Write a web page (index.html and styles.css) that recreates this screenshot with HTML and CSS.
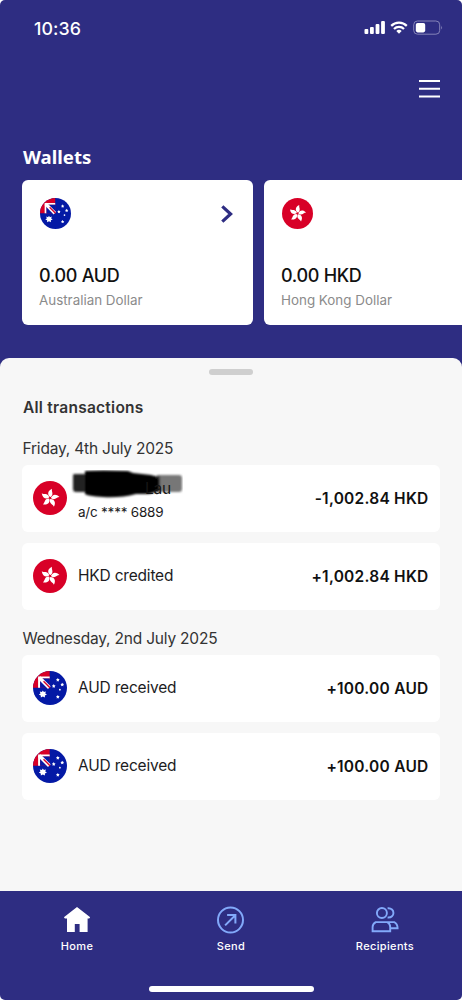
FILE: index.html
```html
<!DOCTYPE html>
<html lang="en">
<head>
<meta charset="utf-8">
<title>Wallets</title>
<link rel="stylesheet" href="styles.css">
</head>
<body>
<svg class="defs" aria-hidden="true">
  <defs>
    <clipPath id="round"><circle cx="50" cy="50" r="50"/></clipPath>
    <path id="petal" d="M50 47C41 43 38 31 51 22C50 30 60 36 52 46Z"/>
    <path id="star" d="M0-5.5L1.8-2.2L5.3-1.4L2.9 1.4L3.3 5L0 3.5L-3.3 5L-2.9 1.4L-5.3-1.4L-1.8-2.2Z"/>
    <symbol id="flag-au" viewBox="0 0 100 100">
      <g clip-path="url(#round)">
        <path fill="#0419a5" d="M0 0H100V100H0Z"/>
        <path fill="#d80027" d="M0 0H49V49H0Z"/>
        <path fill="#fff" d="M15 16H49V22H21V49H15Z"/>
        <path fill="#0419a5" d="M21 22H49V49H21Z"/>
        <path stroke="#fff" stroke-width="11" d="M18 19L48 49"/>
        <path stroke="#d80027" stroke-width="4" d="M31 30L50 49"/>
        <path fill="#fff" d="M29 57L32 62L38 60L36 66L41 69L35 72L35 78L29 75L23 78L23 72L17 69L22 66L20 60L26 62Z"/>
        <g fill="#fff">
          <use href="#star" x="73" y="26"/><use href="#star" x="61" y="44"/>
          <use href="#star" x="86" y="40"/><use href="#star" x="73" y="76"/>
          <circle cx="79" cy="55" r="2.7"/>
        </g>
      </g>
    </symbol>
    <symbol id="flag-hk" viewBox="0 0 100 100">
      <circle cx="50" cy="50" r="50" fill="#d80027"/>
      <g fill="#fff" transform="rotate(10 50 50)">
        <use href="#petal"/>
        <use href="#petal" transform="rotate(72 50 50)"/>
        <use href="#petal" transform="rotate(144 50 50)"/>
        <use href="#petal" transform="rotate(216 50 50)"/>
        <use href="#petal" transform="rotate(288 50 50)"/>
      </g>
    </symbol>
  </defs>
</svg>
<div class="phone">
  <header class="status">
    <span class="clock">10:36</span>
    <svg class="status-icons" width="80" height="16" viewBox="0 0 80 16">
      <g fill="#fff">
        <rect x="0.5" y="9" width="3.8" height="5" rx="1"/>
        <rect x="6" y="7" width="3.8" height="7" rx="1"/>
        <rect x="11.6" y="4" width="3.8" height="10" rx="1"/>
        <rect x="17.1" y="1" width="3.8" height="13" rx="1"/>
        <path d="M35 13.8L32.3 11.1A3.9 3.9 0 0 1 37.7 11.1Z"/>
      </g>
      <g fill="none" stroke="#fff" stroke-width="2.2">
        <path d="M27.2 5.9A11 11 0 0 1 42.8 5.9"/>
        <path d="M30 8.9A7 7 0 0 1 40 8.9"/>
      </g>
      <rect x="49.7" y="1" width="26" height="13.2" rx="3.8" fill="none" stroke="#8583b8"/>
      <path d="M77.2 5.6Q78.8 7.6 77.2 9.6Z" fill="#8583b8"/>
      <rect x="51.8" y="3" width="9.4" height="9.4" rx="1.8" fill="#fff"/>
    </svg>
  </header>
  <div class="toolbar">
    <svg width="21" height="20" viewBox="0 0 21 20" stroke="#fff" stroke-width="2"><path d="M0 2H21M0 9.8H21M0 17.6H21"/></svg>
  </div>
  <h1 class="heading">Wallets</h1>
  <section class="wallets">
    <article class="wallet">
      <div class="wallet-top">
        <svg class="wallet-flag"><use href="#flag-au"/></svg>
        <svg width="14" height="20" viewBox="0 0 14 20" fill="none" stroke="#2e2d82" stroke-width="3.2"><path d="M2.3 2.3L10.6 10L2.3 17.7"/></svg>
      </div>
      <strong class="balance">0.00 AUD</strong>
      <span class="currency">Australian Dollar</span>
    </article>
    <article class="wallet">
      <div class="wallet-top"><svg class="wallet-flag"><use href="#flag-hk"/></svg></div>
      <strong class="balance">0.00 HKD</strong>
      <span class="currency">Hong Kong Dollar</span>
    </article>
  </section>
  <main class="sheet">
    <div class="handle"></div>
    <h2 class="title">All transactions</h2>
    <h3 class="date">Friday, 4th July 2025</h3>
    <div class="tx">
      <svg class="tx-flag"><use href="#flag-hk"/></svg>
      <div class="tx-text">
        <span class="name masked"><span class="surname">Lau</span>
          <svg class="scribble" width="112" height="30" viewBox="0 0 112 30">
            <defs><filter id="soft" x="-10%" y="-10%" width="120%" height="120%"><feGaussianBlur stdDeviation="1"/></filter></defs>
            <g filter="url(#soft)">
              <path fill="#777" d="M86 5H108Q111 5 111 8V19Q111 22 108 22H86Z"/>
              <path fill="#333" d="M80 6H89V22H80Z"/>
              <path fill="#222" d="M3 4H16V22H5Q2 22 2 19V6Q2 4 3 4Z"/>
              <path fill="#000" d="M14 1Q30 0 57 1L62 3L80 5Q86 6 88 10V21L78 24H65Q50 28 32 27Q16 26 14 24Z"/>
            </g>
          </svg>
        </span>
        <span class="account">a/c **** 6889</span>
      </div>
      <b class="amount">-1,002.84 HKD</b>
    </div>
    <div class="tx">
      <svg class="tx-flag"><use href="#flag-hk"/></svg>
      <div class="tx-text"><span class="name">HKD credited</span></div>
      <b class="amount">+1,002.84 HKD</b>
    </div>
    <h3 class="date second">Wednesday, 2nd July 2025</h3>
    <div class="tx">
      <svg class="tx-flag"><use href="#flag-au"/></svg>
      <div class="tx-text"><span class="name">AUD received</span></div>
      <b class="amount">+100.00 AUD</b>
    </div>
    <div class="tx">
      <svg class="tx-flag"><use href="#flag-au"/></svg>
      <div class="tx-text"><span class="name">AUD received</span></div>
      <b class="amount">+100.00 AUD</b>
    </div>
  </main>
  <nav class="nav">
    <div class="tabs">
      <div class="tab">
        <svg width="28" height="28" viewBox="0 0 28 28" fill="#fff"><path d="M14 1L27.2 11.2L26.2 12.6H24.6V26H16.6V18H11.8V26H4V12.6H1.9L.9 11.2Z"/></svg>
        <span>Home</span>
      </div>
      <div class="tab">
        <svg width="28" height="28" viewBox="0 0 28 28" fill="none" stroke="#82a9fa" stroke-width="2"><circle cx="13.5" cy="14" r="12.5"/><path d="M8.1 19.4L18.3 9.2M10.1 9.1H18.4V17.5"/></svg>
        <span>Send</span>
      </div>
      <div class="tab">
        <svg width="28" height="28" viewBox="0 0 28 28" fill="none" stroke="#82a9fa" stroke-width="1.9"><circle cx="10.9" cy="7" r="5"/><path d="M16.6 2.3C24.4 1.5 24.4 12.3 16.6 11.5M4.8 16.1H16.4Q19.2 17.8 19.2 21V25.2H1.6V21Q1.6 17.8 4.8 16.1ZM16.4 16.1H23.2Q26.6 17.8 26.6 22.2H19.2"/></svg>
        <span>Recipients</span>
      </div>
    </div>
    <div class="home-bar"></div>
  </nav>
</div>
</body>
</html>
```
FILE: styles.css
```css
* { box-sizing: border-box; margin: 0; padding: 0; }
body { background: #fff; font-family: Inter, "Liberation Sans", sans-serif; color: #1c1c1e; }
svg { display: block; flex: none; }
.defs { width: 0; height: 0; position: absolute; }
.phone { width: 462px; height: 1000px; overflow: hidden; display: flex; flex-direction: column; background: #2e2d82; border-radius: 5px; }
.status { height: 56px; padding: 0 20px 0 34px; display: flex; align-items: center; justify-content: space-between; color: #fff; }
.clock { font-size: 17.8px; font-weight: 500; letter-spacing: .1px; }
.status-icons { margin-right: -2px; }
.toolbar { height: 86px; padding: 23px 22px 0 0; display: flex; justify-content: flex-end; }
.heading { height: 38px; padding-left: 23px; font: 700 18.6px/29px "Noto Sans", sans-serif; color: #fff; }
.wallets { display: flex; gap: 11px; padding-left: 22px; height: 178px; }
.wallet { flex: none; width: 231px; height: 145px; padding: 18px 19px 0 17px; border-radius: 6px; background: #fff; display: flex; flex-direction: column; }
.wallet-top { display: flex; justify-content: space-between; align-items: center; height: 31px; padding-left: 1px; margin-bottom: 35px; }
.wallet-flag { width: 31px; height: 31px; }
.balance { font-size: 18px; line-height: 24px; font-weight: 500; letter-spacing: -.3px; color: #111; }
.currency { font-size: 13.4px; line-height: 18px; color: #8b8b8b; margin-top: 3px; }
.sheet { height: 533px; padding: 11px 22px 0; background: #f7f7f7; border-radius: 9px 9px 0 0; display: flex; flex-direction: column; }
.handle { width: 44px; height: 6px; border-radius: 3px; background: #cfcfcf; align-self: center; }
.title { margin-top: 23px; font-size: 15.5px; line-height: 20px; font-weight: 600; letter-spacing: .25px; color: #333; padding-left: 1px; }
.date { margin-top: 21px; font-size: 15.5px; line-height: 20px; font-weight: 400; letter-spacing: -.2px; color: #333; padding-left: .5px; margin-bottom: 5.5px; }
.date.second { margin-top: 8px; margin-bottom: 6px; }
.tx { height: 67px; flex: none; border-radius: 6px; background: #fff; padding: 0 11.5px 0 11px; display: flex; align-items: center; margin-bottom: 11px; }
.tx-flag { width: 34px; height: 34px; margin-right: 11px; }
.tx-text { flex: 1; display: flex; flex-direction: column; }
.name { font-size: 15.5px; line-height: 22px; letter-spacing: -.2px; }
.masked { position: relative; padding-left: 67px; margin-top: 2px; }
.surname { position: relative; z-index: 1; color: #161616; }
.scribble { position: absolute; left: -7px; top: -8px; }
.account { font-size: 13.5px; line-height: 18px; letter-spacing: -.22px; margin-top: 3px; }
.amount { font-size: 15.5px; font-weight: 600; letter-spacing: .24px; color: #111; }
.nav { height: 109px; padding-top: 15px; color: #fff; }
.tabs { display: flex; height: 82px; }
.tab { flex: 1; display: flex; flex-direction: column; align-items: center; font-size: 11px; line-height: 16px; font-weight: 500; letter-spacing: .35px; gap: 4px; }
.home-bar { width: 165px; height: 6px; border-radius: 3px; background: #fff; margin: -2px auto 0; }
```
